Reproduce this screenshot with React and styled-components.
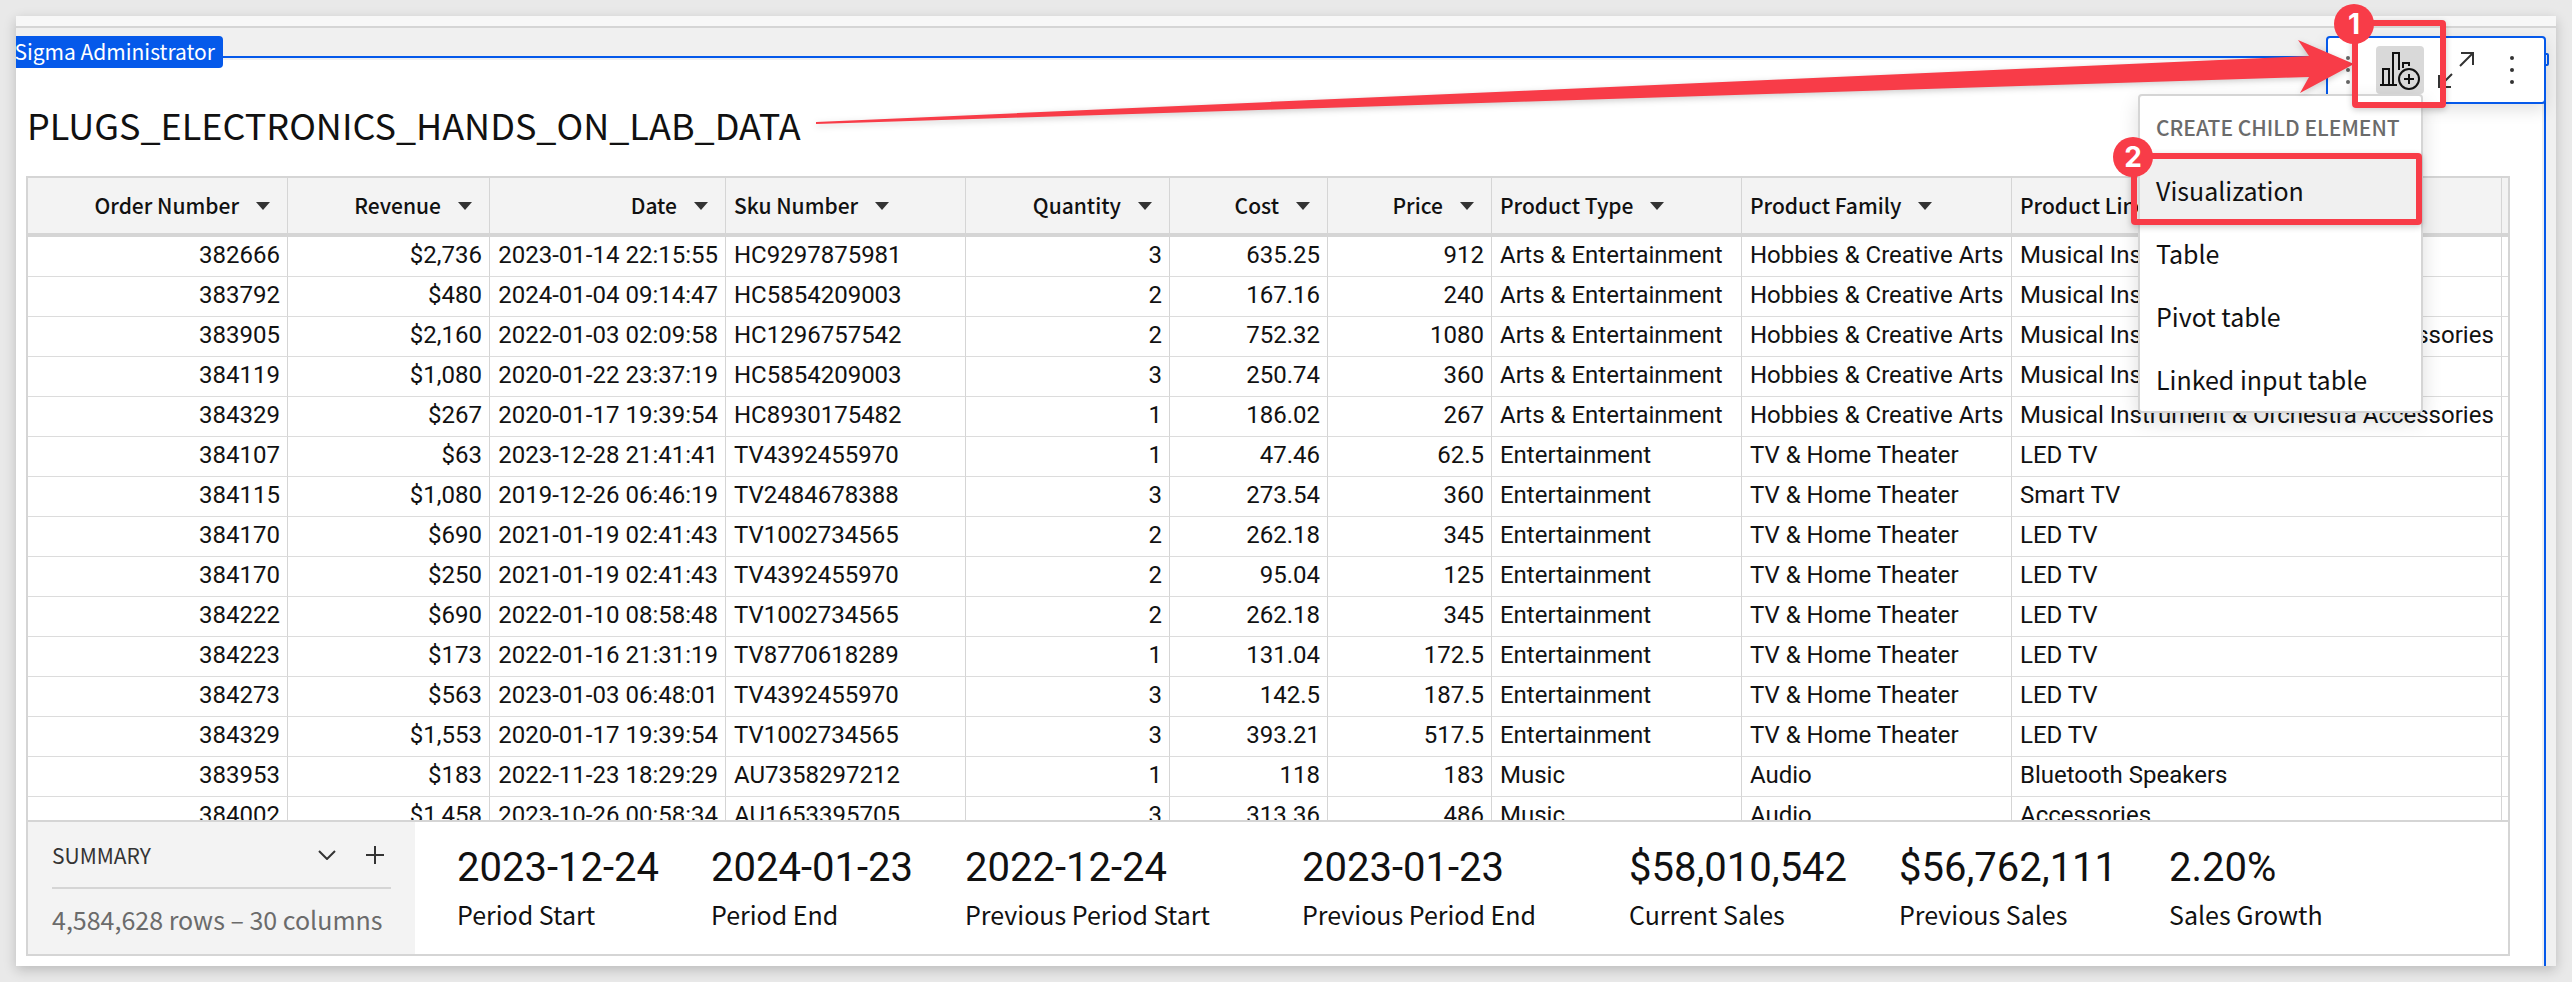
import React from "react";
import styled, { createGlobalStyle, css } from "styled-components";

const sans = '"Noto Sans CJK SC", "Noto Sans", sans-serif';
const data = 'Roboto, "Liberation Sans", sans-serif';
const blue = "#0559ea";
const red = "#f83c48";
const line = "#d5d5d5";

const GlobalStyle = createGlobalStyle`
  * { box-sizing: border-box; }
  body { margin: 0; background: #e9e9e9; color: #111; font-family: ${sans}; }
  button { font: inherit; color: inherit; background: none; border: 0; margin: 0; padding: 0; cursor: pointer; }
`;

const Desk = styled.div`
  padding: 16px;
`;
const Card = styled.div`
  position: relative;
  background: #f0f0f0;
  box-shadow: 0 4px 12px rgba(0, 0, 0, 0.2);
`;
const TopStrip = styled.div`
  height: 12px;
  background: #f7f7f7;
  border-bottom: 2px solid ${line};
`;
const Sheet = styled.main`
  margin: 28px 10px 0 0;
  padding: 44px 34px 10px 10px;
  background: #fff;
  border-top: 2px solid ${blue};
  border-right: 2px solid ${blue};
  box-shadow: inset -2px 2px 0 #f0f0f0;
`;
const OwnerClip = styled.div`
  position: absolute;
  top: 20px;
  left: 0;
  height: 32px;
  width: 207px;
  overflow: hidden;
  display: flex;
  justify-content: flex-end;
  padding-right: 8px;
  background: ${blue};
  border-radius: 0 4px 4px 0;
  color: #fff;
  font-size: 21px;
  line-height: 30px;
  white-space: nowrap;
`;
const Title = styled.h1`
  margin: 0;
  height: 74px;
  padding-left: 1px;
  font-size: 36px;
  line-height: 44px;
  font-weight: 400;
`;
const Panel = styled.section`
  border: 2px solid ${line};
`;
const Scroller = styled.div`
  height: 642px;
  overflow: hidden;
`;
const Grid = styled.table`
  width: 100%;
  table-layout: fixed;
  border-collapse: separate;
  border-spacing: 0;
  font-family: ${data};
  font-size: 24px;
`;
const cell = css`
  padding: 0 7px 0 8px;
  border-right: 1px solid ${line};
  text-align: ${(p) => (p.$right ? "right" : "left")};
  white-space: nowrap;
  &:last-child { border-right: 0; padding: 0; }
`;
const Th = styled.th`
  ${cell}
  height: 59px;
  background: #f3f3f3;
  border-bottom: 4px solid ${line};
  font-family: ${sans};
  font-size: 21px;
  font-weight: 500;
`;
const Td = styled.td`
  ${cell}
  height: 40px;
  line-height: 37px;
  padding-bottom: 2px;
  border-bottom: 1px solid #dcdcdc;
`;
const HeadButton = styled.button`
  display: inline-flex;
  align-items: center;
  gap: 17px;
  padding-right: ${(p) => (p.$right ? "10px" : "0")};
  line-height: 55px;
  vertical-align: top;
`;
const Caret = () => (
  <svg width="14" height="8" viewBox="0 0 14 8" aria-hidden="true">
    <path d="M0 0H14L7 8Z" fill="#333" />
  </svg>
);
const Summary = styled.div`
  display: flex;
  height: 134px;
  border-top: 2px solid ${line};
`;
const SummarySide = styled.div`
  flex: 0 0 387px;
  padding: 16px 24px 0;
  background: #f3f3f3;
`;
const SummaryHead = styled.div`
  display: flex;
  align-items: center;
  gap: 20px;
  height: 51px;
  padding: 0 2px 15px 0;
  border-bottom: 2px solid ${line};
`;
const SummaryTitle = styled.span`
  flex: 1;
  font-size: 21px;
  line-height: 32px;
  color: #333;
`;
const IconButton = styled.button`
  display: flex;
  align-items: center;
  justify-content: center;
  width: 28px;
  height: 32px;
`;
const RowCount = styled.p`
  margin: 12px 0 0;
  font-size: 25px;
  line-height: 36px;
  color: #6b6b6b;
  white-space: nowrap;
`;
const Stats = styled.dl`
  flex: 1;
  margin: 0;
  padding: 19px 0 0 42px;
  display: grid;
  grid-template-columns: 254px 254px 337px 327px 270px 270px 1fr;
`;
const Stat = styled.div`
  display: flex;
  flex-direction: column-reverse;
  justify-content: flex-end;
  white-space: nowrap;
`;
const StatLabel = styled.dt`
  font-size: 25px;
  line-height: 38px;
`;
const StatValue = styled.dd`
  margin: 0;
  font-family: ${data};
  font-size: 40px;
  line-height: 54px;
`;

const Toolbar = styled.div`
  position: absolute;
  top: 20px;
  right: 10px;
  height: 68px;
  display: flex;
  gap: 8px;
  padding: 8px 8px 0;
  background: #fff;
  border: 2px solid ${blue};
  border-radius: 4px;
  box-shadow: 0 6px 16px rgba(0, 0, 0, 0.12);
`;
const ToolButton = styled.button`
  display: flex;
  align-items: center;
  justify-content: center;
  width: 48px;
  height: 48px;
  border-radius: 4px;
  background: ${(p) => (p.$active ? "#d9d9d9" : "none")};
`;
const DragButton = styled(ToolButton)`
  width: 24px;
  margin-right: 8px;
`;
const ResizeHandle = styled.span`
  position: absolute;
  top: 37px;
  right: 7px;
  width: 5px;
  height: 13px;
  border: 2px solid ${blue};
  border-radius: 2px;
`;
const Menu = styled.div`
  position: absolute;
  top: 78px;
  right: 133px;
  width: 285px;
  background: #fff;
  border: 2px solid ${line};
  border-radius: 4px;
  box-shadow: 0 8px 20px rgba(0, 0, 0, 0.14);
`;
const MenuTitle = styled.div`
  height: 63px;
  padding: 0 16px;
  color: #6b6b6b;
  font-size: 21px;
  font-weight: 500;
  line-height: 62px;
  white-space: nowrap;
`;
const MenuItem = styled.button`
  display: block;
  width: 100%;
  height: 63px;
  padding: 0 16px;
  text-align: left;
  font-size: 25px;
  line-height: 63px;
  background: ${(p) => (p.$active ? "#f0f0f0" : "none")};
`;
const Marker = styled.div`
  position: absolute;
  top: ${(p) => p.$top}px;
  right: ${(p) => p.$right}px;
  width: ${(p) => p.$w}px;
  height: ${(p) => p.$h}px;
  border: 6px solid ${red};
  border-radius: 4px;
  box-shadow: 0 2px 6px rgba(0, 0, 0, 0.2);
  pointer-events: none;
`;
const Badge = styled.span`
  position: absolute;
  top: -22px;
  left: -24px;
  width: 40px;
  height: 40px;
  border-radius: 50%;
  background: ${red};
  color: #fff;
  font: 700 28px/40px Inter, sans-serif;
  text-align: center;
`;
const Arrow = styled.svg`
  position: absolute;
  top: 16px;
  left: 798px;
  width: calc(100% - 1000px);
  height: 100px;
  overflow: visible;
  filter: drop-shadow(0 2px 3px rgba(0, 0, 0, 0.2));
  pointer-events: none;
`;

const Dots = ({ color }) => (
  <svg width="4" height="28" viewBox="0 0 4 28" fill={color} aria-hidden="true">
    <circle cx="2" cy="2" r="2" />
    <circle cx="2" cy="14" r="2" />
    <circle cx="2" cy="26" r="2" />
  </svg>
);
const ChartPlus = () => (
  <svg width="48" height="48" viewBox="0 0 48 48" fill="none" stroke="#111" strokeWidth="2" aria-hidden="true">
    <path d="M4 39H21M7 39V23H13V39M17 39V7H23V24M27 22V17H33V20" />
    <circle cx="33" cy="33" r="10" />
    <path d="M33 28V38M28 33H38" />
  </svg>
);
const Expand = () => (
  <svg width="38" height="38" viewBox="0 0 38 38" fill="none" stroke="#333" strokeWidth="2" aria-hidden="true">
    <path d="M24 2H36V14M36 2L23 15M2 24V36H14M2 36L15 23" />
  </svg>
);

const columns = [
  ["Order Number", 260, true],
  ["Revenue", 202, true],
  ["Date", 236, true],
  ["Sku Number", 240, false],
  ["Quantity", 204, true],
  ["Cost", 158, true],
  ["Price", 164, true],
  ["Product Type", 250, false],
  ["Product Family", 270, false],
  ["Product Line", 490, false],
];
const arts = ["Arts & Entertainment", "Hobbies & Creative Arts", "Musical Instrument & Orchestra Accessories"];
const artsShort = ["Arts & Entertainment", "Hobbies & Creative Arts", "Musical Instruments"];
const tv = ["Entertainment", "TV & Home Theater", "LED TV"];
const rows = [
  ["382666", "$2,736", "2023-01-14 22:15:55", "HC9297875981", "3", "635.25", "912", ...artsShort],
  ["383792", "$480", "2024-01-04 09:14:47", "HC5854209003", "2", "167.16", "240", ...artsShort],
  ["383905", "$2,160", "2022-01-03 02:09:58", "HC1296757542", "2", "752.32", "1080", ...arts],
  ["384119", "$1,080", "2020-01-22 23:37:19", "HC5854209003", "3", "250.74", "360", ...artsShort],
  ["384329", "$267", "2020-01-17 19:39:54", "HC8930175482", "1", "186.02", "267", ...arts],
  ["384107", "$63", "2023-12-28 21:41:41", "TV4392455970", "1", "47.46", "62.5", ...tv],
  ["384115", "$1,080", "2019-12-26 06:46:19", "TV2484678388", "3", "273.54", "360", "Entertainment", "TV & Home Theater", "Smart TV"],
  ["384170", "$690", "2021-01-19 02:41:43", "TV1002734565", "2", "262.18", "345", ...tv],
  ["384170", "$250", "2021-01-19 02:41:43", "TV4392455970", "2", "95.04", "125", ...tv],
  ["384222", "$690", "2022-01-10 08:58:48", "TV1002734565", "2", "262.18", "345", ...tv],
  ["384223", "$173", "2022-01-16 21:31:19", "TV8770618289", "1", "131.04", "172.5", ...tv],
  ["384273", "$563", "2023-01-03 06:48:01", "TV4392455970", "3", "142.5", "187.5", ...tv],
  ["384329", "$1,553", "2020-01-17 19:39:54", "TV1002734565", "3", "393.21", "517.5", ...tv],
  ["383953", "$183", "2022-11-23 18:29:29", "AU7358297212", "1", "118", "183", "Music", "Audio", "Bluetooth Speakers"],
  ["384002", "$1,458", "2023-10-26 00:58:34", "AU1653395705", "3", "313.36", "486", "Music", "Audio", "Accessories"],
];
const stats = [
  ["2023-12-24", "Period Start"],
  ["2024-01-23", "Period End"],
  ["2022-12-24", "Previous Period Start"],
  ["2023-01-23", "Previous Period End"],
  ["$58,010,542", "Current Sales"],
  ["$56,762,111", "Previous Sales"],
  ["2.20%", "Sales Growth"],
];

export default function App() {
  return (
    <Desk>
      <GlobalStyle />
      <Card>
        <TopStrip />
        <Sheet>
          <Title>PLUGS_ELECTRONICS_HANDS_ON_LAB_DATA</Title>
          <Panel>
            <Scroller>
              <Grid>
                <colgroup>
                  {columns.map(([name, width]) => (
                    <col key={name} style={{ width: `${(width / 2480) * 100}%` }} />
                  ))}
                  <col />
                </colgroup>
                <thead>
                  <tr>
                    {columns.map(([name, , right]) => (
                      <Th key={name} scope="col" $right={right}>
                        <HeadButton type="button" $right={right}>
                          {name}
                          <Caret />
                        </HeadButton>
                      </Th>
                    ))}
                    <Th as="td" />
                  </tr>
                </thead>
                <tbody>
                  {rows.map((row, r) => (
                    <tr key={r}>
                      {row.map((value, c) => (
                        <Td key={c} $right={columns[c][2]}>{value}</Td>
                      ))}
                      <Td />
                    </tr>
                  ))}
                </tbody>
              </Grid>
            </Scroller>
            <Summary>
              <SummarySide>
                <SummaryHead>
                  <SummaryTitle>SUMMARY</SummaryTitle>
                  <IconButton type="button" aria-label="Collapse summary">
                    <svg width="18" height="10" viewBox="0 0 18 10" fill="none" stroke="#333" strokeWidth="2">
                      <path d="M1 1L9 9L17 1" />
                    </svg>
                  </IconButton>
                  <IconButton type="button" aria-label="Add summary">
                    <svg width="18" height="18" viewBox="0 0 18 18" fill="none" stroke="#333" strokeWidth="2">
                      <path d="M9 0V18M0 9H18" />
                    </svg>
                  </IconButton>
                </SummaryHead>
                <RowCount>4,584,628 rows – 30 columns</RowCount>
              </SummarySide>
              <Stats>
                {stats.map(([value, label]) => (
                  <Stat key={label}>
                    <StatLabel>{label}</StatLabel>
                    <StatValue>{value}</StatValue>
                  </Stat>
                ))}
              </Stats>
            </Summary>
          </Panel>
        </Sheet>
        <OwnerClip>Sigma Administrator</OwnerClip>
        <ResizeHandle />
        <Toolbar>
          <DragButton type="button" aria-label="Move"><Dots color="#666" /></DragButton>
          <ToolButton type="button" $active aria-label="Create child element"><ChartPlus /></ToolButton>
          <ToolButton type="button" aria-label="Maximize"><Expand /></ToolButton>
          <ToolButton type="button" aria-label="More"><Dots color="#333" /></ToolButton>
        </Toolbar>
        <Menu>
          <MenuTitle>CREATE CHILD ELEMENT</MenuTitle>
          <MenuItem type="button" $active>Visualization</MenuItem>
          <MenuItem type="button">Table</MenuItem>
          <MenuItem type="button">Pivot table</MenuItem>
          <MenuItem type="button">Linked input table</MenuItem>
        </Menu>
        <Arrow viewBox="0 0 1540 100" preserveAspectRatio="none">
          <path d="M2 90L1495 24L1484 8L1540 32L1486 61L1495 45L2 92Z" fill={red} />
        </Arrow>
        <Marker $top={4} $right={110} $w={94} $h={88}><Badge>1</Badge></Marker>
        <Marker $top={137} $right={134} $w={291} $h={72}><Badge>2</Badge></Marker>
      </Card>
    </Desk>
  );
}
